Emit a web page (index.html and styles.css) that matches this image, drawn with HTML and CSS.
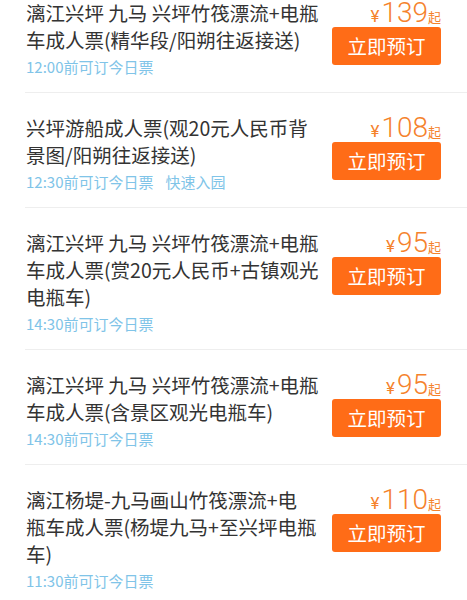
FILE: index.html
```html
<!DOCTYPE html>
<html lang="zh-CN">
<head>
    <meta charset="UTF-8">
    <meta name="viewport" content="width=device-width, initial-scale=1.0">
    <title>门票列表</title>
    <link rel="stylesheet" href="styles.css">
</head>
<body>
    <ul class="ticket-list">
        <li class="ticket">
            <div class="ticket-info">
                <p class="ticket-title">漓江兴坪 九马 兴坪竹筏漂流+电瓶车成人票(精华段/阳朔往返接送)</p>
                <p class="ticket-note">12:00前可订今日票</p>
            </div>
            <div class="ticket-side">
                <div class="price"><span class="yen">¥</span><span class="num">139</span><span class="from">起</span></div>
                <a href="#" class="btn-book">立即预订</a>
            </div>
        </li>
        <li class="ticket">
            <div class="ticket-info">
                <p class="ticket-title">兴坪游船成人票(观20元人民币背景图/阳朔往返接送)</p>
                <p class="ticket-note">12:30前可订今日票<span class="tag">快速入园</span></p>
            </div>
            <div class="ticket-side">
                <div class="price"><span class="yen">¥</span><span class="num">108</span><span class="from">起</span></div>
                <a href="#" class="btn-book">立即预订</a>
            </div>
        </li>
        <li class="ticket">
            <div class="ticket-info">
                <p class="ticket-title">漓江兴坪 九马 兴坪竹筏漂流+电瓶车成人票(赏20元人民币+古镇观光电瓶车)</p>
                <p class="ticket-note">14:30前可订今日票</p>
            </div>
            <div class="ticket-side">
                <div class="price"><span class="yen">¥</span><span class="num">95</span><span class="from">起</span></div>
                <a href="#" class="btn-book">立即预订</a>
            </div>
        </li>
        <li class="ticket">
            <div class="ticket-info">
                <p class="ticket-title">漓江兴坪 九马 兴坪竹筏漂流+电瓶车成人票(含景区观光电瓶车)</p>
                <p class="ticket-note">14:30前可订今日票</p>
            </div>
            <div class="ticket-side">
                <div class="price"><span class="yen">¥</span><span class="num">95</span><span class="from">起</span></div>
                <a href="#" class="btn-book">立即预订</a>
            </div>
        </li>
        <li class="ticket">
            <div class="ticket-info">
                <p class="ticket-title">漓江杨堤-九马画山竹筏漂流+电<br>瓶车成人票(杨堤九马+至兴坪电瓶车)</p>
                <p class="ticket-note">11:30前可订今日票</p>
            </div>
            <div class="ticket-side">
                <div class="price"><span class="yen">¥</span><span class="num">110</span><span class="from">起</span></div>
                <a href="#" class="btn-book">立即预订</a>
            </div>
        </li>
    </ul>
</body>
</html>
```

FILE: styles.css
```css
body {
    font-family: "Noto Sans CJK SC", sans-serif;
    background-color: #fff;
    color: #333;
    margin: 0;
    padding: 0;
}

.ticket-list {
    list-style: none;
    margin: -22px 0 0 0;
    padding: 0;
}

.ticket {
    display: flex;
    justify-content: space-between;
    margin-left: 25px;
    padding: 21px 26px 15px 1px;
    border-bottom: 1px solid #eeeeee;
}

.ticket-info {
    width: 296px;
}

.ticket-title {
    margin: 0;
    font-size: 19.5px;
    line-height: 27px;
    color: #333;
}

.ticket-note {
    margin: 4px 0 0 0;
    font-size: 15px;
    line-height: 20px;
    color: #80c4e8;
}

.ticket-note .tag {
    margin-left: 12px;
}

.ticket-side {
    width: 109px;
    flex-shrink: 0;
}

.price {
    height: 28px;
    line-height: 28px;
    text-align: right;
    color: #f5822c;
    white-space: nowrap;
}

.price .yen {
    font-family: Roboto, sans-serif;
    font-size: 17px;
    margin-right: 2px;
}

.price .num {
    font-family: Roboto, sans-serif;
    font-weight: 300;
    font-size: 28px;
}

.price .from {
    font-size: 13px;
}

.btn-book {
    display: block;
    height: 38px;
    line-height: 38px;
    background-color: #ff6c17;
    color: #fff;
    font-size: 19.5px;
    text-align: center;
    border-radius: 3px;
    text-decoration: none;
}
```
